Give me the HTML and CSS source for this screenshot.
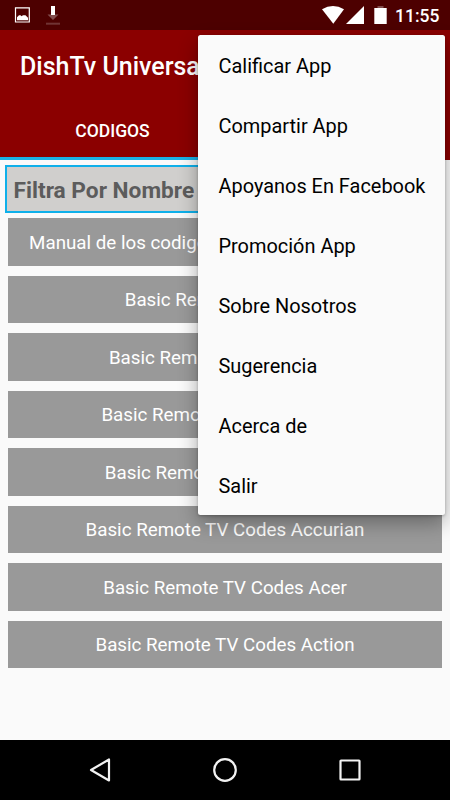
FILE: index.html
```html
<!DOCTYPE html>
<html lang="es">
  <head>
    <meta charset="UTF-8" />
    <meta name="viewport" content="width=device-width, initial-scale=1.0" />
    <title>DishTv Universal</title>
    <link rel="stylesheet" href="styles.css">
  </head>
  <body>
    <div class="screen">
      <div class="status-bar">
        <svg class="notifications" width="64" height="30" viewBox="0 0 64 30">
          <path d="M15.5 7.800h13.800v14.200h-13.800z" fill="none" stroke="#fff" stroke-width="1.2" />
          <path d="M17 20.3v-3l2-2h1.500l1 1 1.500-1h2.500l2.500 2.500v2.500z" fill="#fff" />
          <path d="M51 6h4v9h-4z" fill="#fff" />
          <path d="M47.500 14.500H51v.5h4v-.5h3.500L53 20z" fill="#fff" opacity=".3" />
          <path d="M46 22.700h14v2H46z" fill="#fff" opacity=".2" />
        </svg>
        <div class="status-right">
          <svg width="66" height="30" viewBox="322 0 66 30">
            <path d="M322 9.200Q333 2.800 344 9.200L333.300 23.700z" fill="#fff" />
            <path d="M364 6v18h-18z" fill="#fff" />
            <path d="M377.500 6h6v2h-6z" fill="#fff" opacity=".3" />
            <path d="M374.300 8h12.400v16h-12.400z" fill="#fff" />
          </svg>
          <span class="clock">11:55</span>
        </div>
      </div>
      <header class="toolbar">
        <h1>DishTv Universal</h1>
      </header>
      <nav class="tabs">
        <div class="tab active">CODIGOS</div>
        <div class="tab"></div>
      </nav>
      <main class="content">
        <input class="filter" type="text" placeholder="Filtra Por Nombre" />
        <div class="list">
          <button>Manual de los codigos del control remoto Dish.</button>
          <button>Basic Remote TV Codes</button>
          <button>Basic Remote TV Codes 3M</button>
          <button>Basic Remote TV Codes Abex</button>
          <button>Basic Remote TV Codes ABS</button>
          <button>Basic Remote TV Codes Accurian</button>
          <button>Basic Remote TV Codes Acer</button>
          <button>Basic Remote TV Codes Action</button>
        </div>
      </main>
      <footer class="nav-bar">
        <svg width="26" height="26" viewBox="0 0 26 26">
          <path d="M22 2.500v21L4 13z" />
        </svg>
        <svg width="26" height="26" viewBox="0 0 26 26">
          <circle cx="13" cy="13" r="10.800" />
        </svg>
        <svg width="26" height="26" viewBox="0 0 26 26">
          <rect x="3.500" y="3.500" width="19" height="19" rx="0.500" />
        </svg>
      </footer>
      <ul class="menu">
        <li>Calificar App</li>
        <li>Compartir App</li>
        <li>Apoyanos En Facebook</li>
        <li>Promoción App</li>
        <li>Sobre Nosotros</li>
        <li>Sugerencia</li>
        <li>Acerca de</li>
        <li>Salir</li>
      </ul>
    </div>
  </body>
</html>
```

FILE: styles.css
```css
body {
  margin: 0;
  font-family: Roboto, sans-serif;
}
.screen {
  position: relative;
  display: flex;
  flex-direction: column;
  width: 450px;
  height: 800px;
  overflow: hidden;
  background: #fafafa;
}
.status-bar {
  display: flex;
  justify-content: space-between;
  height: 30px;
  background: #4d0000;
}
.status-right {
  display: flex;
  padding-right: 10.5px;
}
.clock {
  margin-left: 7px;
  color: #fff;
  font-size: 17.5px;
  font-weight: 500;
  line-height: 32px;
}
.toolbar {
  height: 70px;
  padding-left: 20px;
  background: #8b0000;
}
.toolbar h1 {
  margin: 0;
  color: #fff;
  font-size: 25px;
  font-weight: 500;
  line-height: 74px;
}
.tabs {
  display: flex;
  height: 60px;
  background: #8b0000;
}
.tab {
  flex: 1;
  box-sizing: border-box;
  color: #fff;
  font-size: 17.5px;
  font-weight: 500;
  line-height: 63px;
  text-align: center;
}
.tab.active {
  height: 60px;
  border-bottom: 3px solid #1bb2e6;
}
.content {
  flex: 1;
  padding: 5px 5px 0;
}
.filter {
  display: block;
  box-sizing: border-box;
  width: 100%;
  height: 48px;
  padding: 2px 6.5px 0;
  border: 2px solid #0eb0ea;
  border-radius: 0;
  background: #d0cfcd;
  font-family: inherit;
  font-size: 22.7px;
  font-weight: bold;
}
.filter::placeholder {
  color: #5c5c5c;
}
.list {
  display: flex;
  flex-direction: column;
  gap: 10px;
  padding: 5px 3px 0;
}
.list button {
  height: 47.5px;
  padding: 2px 0 0;
  border: none;
  background: #999;
  color: #fff;
  font-family: inherit;
  font-size: 18.75px;
  white-space: nowrap;
}
.nav-bar {
  display: flex;
  justify-content: center;
  align-items: center;
  gap: 99px;
  height: 60px;
  background: #000;
}
.nav-bar svg {
  fill: none;
  stroke: #f2f2f2;
  stroke-width: 2.2;
  stroke-linejoin: round;
}
.menu {
  position: absolute;
  top: 35px;
  right: 5px;
  box-sizing: border-box;
  width: 247px;
  height: 480px;
  margin: 0;
  padding: 0 0 0 20.5px;
  border-radius: 2.5px;
  background: #fafafa;
  box-shadow: 0 8px 20px rgba(0, 0, 0, 0.32), 0 1px 3px rgba(0, 0, 0, 0.25);
  list-style: none;
}
.menu li {
  height: 60px;
  color: #000;
  font-size: 19.93px;
  line-height: 63px;
}
```
